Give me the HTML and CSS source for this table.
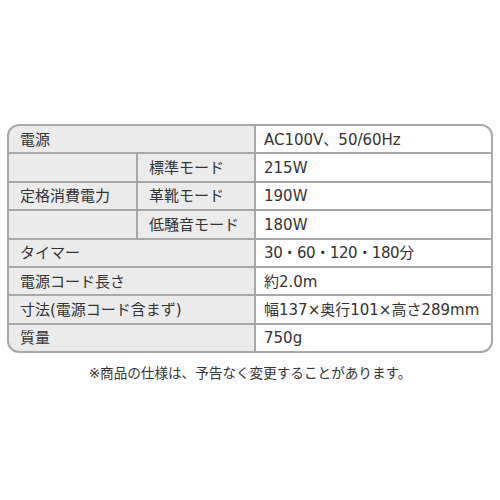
FILE: index.html
```html
<!DOCTYPE html>
<html lang="ja">
<head>
<meta charset="utf-8">
<link rel="stylesheet" href="styles.css">
</head>
<body>
<div class="page">
  <div class="spec">
    <div class="cell label wide">電源</div>
    <div class="cell value">AC100V、50/60Hz</div>

    <div class="cell label"></div>
    <div class="cell label">標準モード</div>
    <div class="cell value">215W</div>

    <div class="cell label">定格消費電力</div>
    <div class="cell label">革靴モード</div>
    <div class="cell value">190W</div>

    <div class="cell label"></div>
    <div class="cell label">低騒音モード</div>
    <div class="cell value">180W</div>

    <div class="cell label wide">タイマー</div>
    <div class="cell value timer">30・60・120・180分</div>

    <div class="cell label wide">電源コード長さ</div>
    <div class="cell value">約2.0m</div>

    <div class="cell label wide">寸法(電源コード含まず)</div>
    <div class="cell value">幅137×奥行101×高さ289mm</div>

    <div class="cell label wide">質量</div>
    <div class="cell value">750g</div>
  </div>
  <p class="note">※商品の仕様は、予告なく変更することがあります。</p>
</div>
</body>
</html>
```

FILE: styles.css
```css
html, body {
  margin: 0;
  padding: 0;
  background: #ffffff;
}
body {
  font-family: "DejaVu Sans", "Noto Sans CJK JP", sans-serif;
  color: #333333;
}
.page {
  width: 500px;
  height: 500px;
  padding: 124px 7px 0 7px;
  box-sizing: border-box;
}
.spec {
  display: grid;
  grid-template-columns: 127px 116px 235px;
  grid-template-rows: repeat(8, 26.4px);
  gap: 2px;
  background: #a8a8a8;
  border: 2px solid #a8a8a8;
  border-radius: 12px;
  overflow: hidden;
}
.cell {
  display: flex;
  align-items: center;
  padding-left: 11px;
  padding-top: 2px;
  font-size: 15px;
  line-height: 1;
  white-space: nowrap;
}
.label {
  background: #ebebeb;
}
.wide {
  grid-column: span 2;
}
.value {
  background: #ffffff;
  padding-left: 8px;
}
.timer {
  letter-spacing: -0.4px;
}
.note {
  margin: 9px 0 0 0;
  text-align: center;
  font-size: 13.6px;
  color: #333333;
}
```
